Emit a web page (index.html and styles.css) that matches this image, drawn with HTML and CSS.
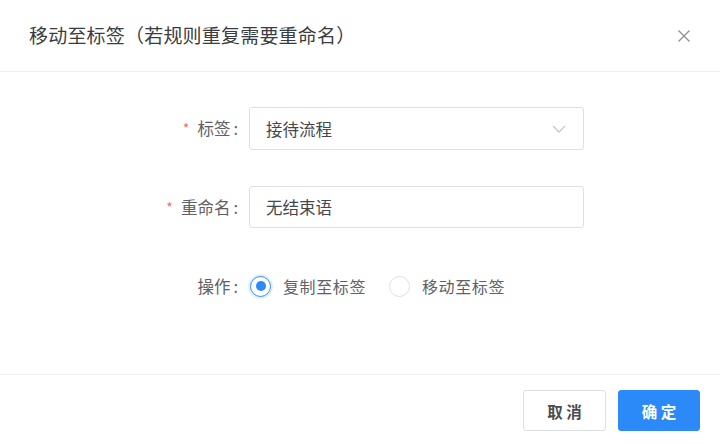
FILE: index.html
```html
<!DOCTYPE html>
<html lang="zh-CN">
<head>
<meta charset="utf-8">
<link rel="stylesheet" href="styles.css">
</head>
<body>
<div class="dialog">
  <div class="header">
    <span class="title">移动至标签（若规则重复需要重命名）</span>
    <span class="close">
      <svg width="14" height="14" viewBox="0 0 14 14"><path d="M1.5 1.5L12.5 12.5M12.5 1.5L1.5 12.5" stroke="#8e9199" stroke-width="1.4" fill="none"/></svg>
    </span>
  </div>
  <div class="body">
    <div class="form">
      <label class="label"><span class="req">*</span>标签<span class="colon">:</span></label>
      <div class="input select">
        <span>接待流程</span>
        <svg class="chev" width="14" height="8" viewBox="0 0 14 8"><path d="M1 1L7 7L13 1" stroke="#c4c7cf" stroke-width="1.3" fill="none"/></svg>
      </div>
      <label class="label"><span class="req">*</span>重命名<span class="colon">:</span></label>
      <div class="input"><span>无结束语</span></div>
      <label class="label">操作<span class="colon">:</span></label>
      <div class="radios">
        <span class="radio checked"><span class="dot"></span></span><span class="rtext">复制至标签</span>
        <span class="radio"></span><span class="rtext">移动至标签</span>
      </div>
    </div>
  </div>
  <div class="footer">
    <button class="btn">取 消</button>
    <button class="btn primary">确 定</button>
  </div>
</div>
</body>
</html>
```
FILE: styles.css
```css
* { box-sizing: border-box; }
html, body { margin: 0; padding: 0; background: #fff; }
body {
  font-family: "Noto Sans CJK SC", "Noto Sans", sans-serif;
  color: #606266;
  width: 720px;
  height: 444px;
  overflow: hidden;
}
.dialog { width: 720px; height: 444px; display: flex; flex-direction: column; }
.header {
  height: 72px;
  padding: 0 29px 0 29px;
  display: flex;
  align-items: center;
  justify-content: space-between;
  border-bottom: 1px solid #eeeff2;
}
.title { font-size: 19px; color: #3a3c40; letter-spacing: 0.2px; margin-top: -2px; }
.close { display: flex; }
.body { height: 302px; padding-top: 35px; }
.form {
  display: grid;
  grid-template-columns: 238px 335px;
  grid-auto-rows: 42px;
  column-gap: 11px;
  row-gap: 37px;
}
.label {
  display: flex;
  align-items: center;
  justify-content: flex-end;
  font-size: 16.5px;
  color: #5f6166;
}
.colon { margin-left: 3px; }
.req { color: #f56c6c; margin-right: 8px; font-size: 14px; }
.input {
  border: 1px solid #dcdfe6;
  border-radius: 3px;
  display: flex;
  align-items: center;
  padding: 0 16px;
  font-size: 16.5px;
  color: #45474c;
}
.select { justify-content: space-between; height: 43px; }
.chev { margin-right: 1px; }
.radios { display: flex; align-items: center; font-size: 16px; letter-spacing: 0.6px; color: #5f6166; }
.radio {
  width: 21px;
  height: 21px;
  border-radius: 50%;
  border: 1px solid #dcdfe6;
  display: flex;
  align-items: center;
  justify-content: center;
  margin-left: 1px;
}
.radio.checked { border: 1.5px solid #2b8af7; box-shadow: 0 0 0 2px rgba(43, 138, 247, 0.12); }
.dot { width: 10px; height: 10px; border-radius: 50%; background: #2b8af7; }
.rtext { margin-left: 12px; margin-right: 22px; }
.footer {
  border-top: 1px solid #eeeff2;
  flex: 1;
  display: flex;
  justify-content: flex-end;
  align-items: flex-start;
  padding: 15px 20px 0 0;
  gap: 12px;
}
.btn {
  width: 83px;
  height: 41px;
  border: 1px solid #dcdfe6;
  border-radius: 3px;
  background: #fff;
  color: #4a4c51;
  font-family: "Noto Sans CJK SC", sans-serif;
  font-size: 15.5px;
  font-weight: 600;
  padding: 0;
}
.btn.primary { background: #2b8af7; border-color: #2b8af7; color: #fff; width: 82px; }
```
